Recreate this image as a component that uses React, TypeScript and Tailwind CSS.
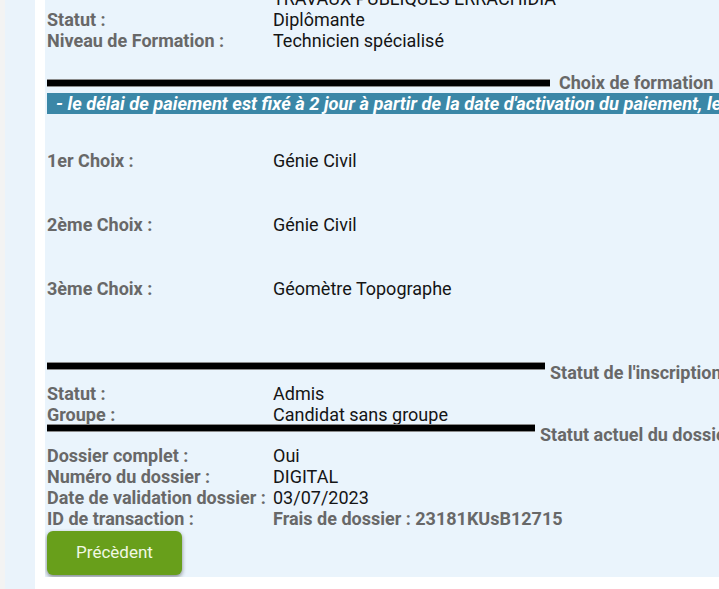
const label = 'font-bold text-[#686868]';
const value = 'text-[#151515]';

function Row({ k, v, strong }: { k: string; v: string; strong?: boolean }) {
  return (
    <div className="flex h-[21px] leading-[21px] whitespace-nowrap">
      <div className={`w-[226px] shrink-0 ${label}`}>{k}</div>
      <div className={strong ? label : value}>{v}</div>
    </div>
  );
}

function SectionBar({ width, title, className }: { width: number; title: string; className: string }) {
  return (
    <div className={`flex whitespace-nowrap ${className}`}>
      <div
        className="h-[8px] shrink-0 bg-black border-y border-[#8a8a8a]"
        style={{ width }}
      />
      <span className={`leading-[21px] ${label}`}>{title}</span>
    </div>
  );
}

export default function App() {
  return (
    <div className="w-[719px] h-[589px] overflow-hidden bg-white flex font-['Roboto',sans-serif] text-[18px]">
      <div className="w-[5px] shrink-0 bg-[#f3f3f3]" />
      <div className="w-[30px] shrink-0 bg-[#eaf3fb]" />
      <div className="w-[10px] shrink-0 bg-white" />

      {/* Main panel */}
      <div className="w-[900px] shrink-0 self-start h-[577px] bg-[#eaf4fc] pl-[2px] overflow-hidden">
        <div className="-mt-[12px]">
          <Row k="" v="TRAVAUX PUBLIQUES ERRACHIDIA" />
          <Row k="Statut :" v="Diplômante" />
          <Row k="Niveau de Formation :" v="Technicien spécialisé" />
        </div>

        <SectionBar width={503} title="Choix de formation" className="mt-[21px] h-[21px] items-center gap-[9px]" />

        <div className="h-[21px] leading-[21px] bg-[#3b87a7] text-white font-bold italic text-[18.3px] pl-[9px] whitespace-nowrap">
          - le délai de paiement est fixé à 2 jour à partir de la date d'activation du paiement, le paiement doit être effectué
        </div>

        <div className="mt-[36px]">
          <Row k="1er Choix :" v="Génie Civil" />
        </div>
        <div className="mt-[43px]">
          <Row k="2ème Choix :" v="Génie Civil" />
        </div>
        <div className="mt-[43px]">
          <Row k="3ème Choix :" v="Géomètre Topographe" />
        </div>

        <SectionBar width={498} title="Statut de l'inscription" className="mt-[63px] h-[21px] items-start gap-[5px]" />
        <Row k="Statut :" v="Admis" />
        <Row k="Groupe :" v="Candidat sans groupe" />

        <SectionBar width={488} title="Statut actuel du dossier" className="h-[21px] items-start gap-[5px] -mt-[1px]" />
        <Row k="Dossier complet :" v="Oui" />
        <Row k="Numéro du dossier :" v="DIGITAL" />
        <Row k="Date de validation dossier :" v="03/07/2023" />
        <Row k="ID de transaction :" v="Frais de dossier : 23181KUsB12715" strong />

        <button className="mt-[2px] w-[135px] h-[44px] rounded-[6px] bg-[#689f1b] text-[#f1f8e4] text-[17px] shadow-[0_2px_4px_rgba(0,0,0,0.45)]">
          Précèdent
        </button>
      </div>
    </div>
  );
}
